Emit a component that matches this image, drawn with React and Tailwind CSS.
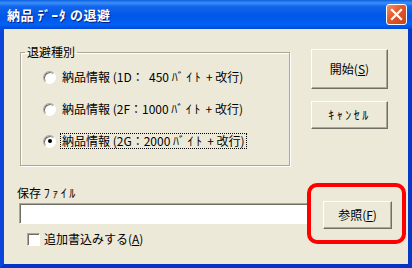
import React from 'react';

const font = "font-['Noto_Sans_CJK_JP','Noto_Sans',sans-serif]";

function Kana({ w = '2px', children }) {
  return <span className={w === '1px' ? 'tracking-[1px]' : 'tracking-[2.5px]'}>{children}</span>;
}

// Classic raised push button
function PushButton({ className = '', children }) {
  return (
    <button
      className={`flex items-center justify-center bg-[#ece9d8] text-[12px] leading-[14px] text-black border border-t-white border-l-white border-r-[#716f64] border-b-[#716f64] shadow-[inset_-1px_-1px_0_#aca899] ${className}`}
    >
      {children}
    </button>
  );
}

function Radio({ checked, focused, children }) {
  return (
    <div className="flex items-center h-[32px]">
      <span className="relative w-[13px] h-[13px] rounded-full bg-white border border-t-[#aca899] border-l-[#aca899] border-r-white border-b-white shadow-[inset_1px_1px_0_#716f64] flex items-center justify-center shrink-0">
        {checked && <span className="w-[4px] h-[4px] rounded-full bg-black" />}
      </span>
      <span
        className={`ml-[4px] whitespace-pre text-[12px] leading-[14px] text-black px-[1px] border ${
          focused ? 'border-dotted border-black' : 'border-transparent'
        }`}
      >
        {children}
      </span>
    </div>
  );
}

export default function App() {
  return (
    <div className={`relative w-[412px] h-[268px] flex flex-col ${font}`}>
      {/* Title bar */}
      <div className="h-[29px] shrink-0 flex items-center pl-[7px] pr-[5px] bg-[linear-gradient(180deg,#0a5fe0_0%,#3d8ff8_10%,#1266ec_22%,#0056e6_55%,#0061f4_85%,#0049d6_100%)]">
        <span className="text-white text-[13px] font-bold leading-none tracking-[0.5px] [text-shadow:1px_1px_0_#0a1e80]">
          納品 <Kana w="1px">ﾃﾞｰﾀ</Kana> の退避
        </span>
        <div className="ml-auto w-[21px] h-[21px] rounded-[3px] border border-white bg-[linear-gradient(135deg,#f0906a_0%,#e2582b_45%,#c8421c_100%)] flex items-center justify-center">
          <svg width="13" height="13" viewBox="0 0 13 13">
            <path d="M2 2 L11 11 M11 2 L2 11" stroke="white" strokeWidth="2.2" strokeLinecap="square" />
          </svg>
        </div>
      </div>

      {/* Client area inside the frame */}
      <div className="flex-1 flex flex-col bg-[#ece9d8] border-l-[4px] border-r-[4px] border-b-[4px] border-l-[#0a45dc] border-r-[#0838c8] border-b-[#0733c4]">
        {/* Top row: group box + buttons */}
        <div className="flex pl-[16px]">
          <fieldset className="mt-[16px] w-[270px] h-[121px] border border-[#aca899] shadow-[1px_1px_0_white,inset_1px_1px_0_white]">
            <legend className="ml-[4px] px-[2px] text-[12px] leading-[14px] text-black">退避種別</legend>
            <div className="pl-[22px] pt-[2px]">
              <Radio>納品情報 (1D：  450 <Kana>ﾊﾞｲﾄ</Kana> + 改行)</Radio>
              <Radio>納品情報 (2F：1000 <Kana>ﾊﾞｲﾄ</Kana> + 改行)</Radio>
              <Radio checked focused>納品情報 (2G：2000 <Kana>ﾊﾞｲﾄ</Kana> + 改行)</Radio>
            </div>
          </fieldset>

          <div className="ml-[21px] mt-[20px] flex flex-col gap-[12px]">
            <PushButton className="w-[77px] h-[40px]">
              開始(<span className="underline">S</span>)
            </PushButton>
            <PushButton className="w-[77px] h-[28px]">
              <Kana>ｷｬﾝｾﾙ</Kana>
            </PushButton>
          </div>
        </div>

        {/* Save file section */}
        <div className="flex flex-col pl-[13px] mt-[20px]">
          <span className="text-[12px] leading-[14px] text-black">
            保存 <Kana>ﾌｧｲﾙ</Kana>
          </span>
          <div className="flex items-start">
            <div className="ml-[2px] mt-[3px] w-[291px] h-[21px] bg-white border border-t-[#aca899] border-l-[#aca899] border-r-white border-b-white shadow-[inset_1px_1px_0_#716f64]" />
            <PushButton className="ml-[13px] mt-[1px] w-[69px] h-[28px]">
              参照(<span className="underline">F</span>)
            </PushButton>
          </div>
          <div className="flex items-center mt-[3px] pl-[10px]">
            <span className="w-[13px] h-[13px] bg-white border border-t-[#aca899] border-l-[#aca899] border-r-white border-b-white shadow-[inset_1px_1px_0_#716f64]" />
            <span className="ml-[4px] text-[12px] leading-[14px] text-black">
              追加書込みする(<span className="underline">A</span>)
            </span>
          </div>
        </div>
      </div>

      {/* Red highlight annotation over the browse button */}
      <div className="absolute left-[307px] top-[183px] w-[99px] h-[61px] border-[4px] border-[#ff0000] rounded-[10px] pointer-events-none" />
    </div>
  );
}
